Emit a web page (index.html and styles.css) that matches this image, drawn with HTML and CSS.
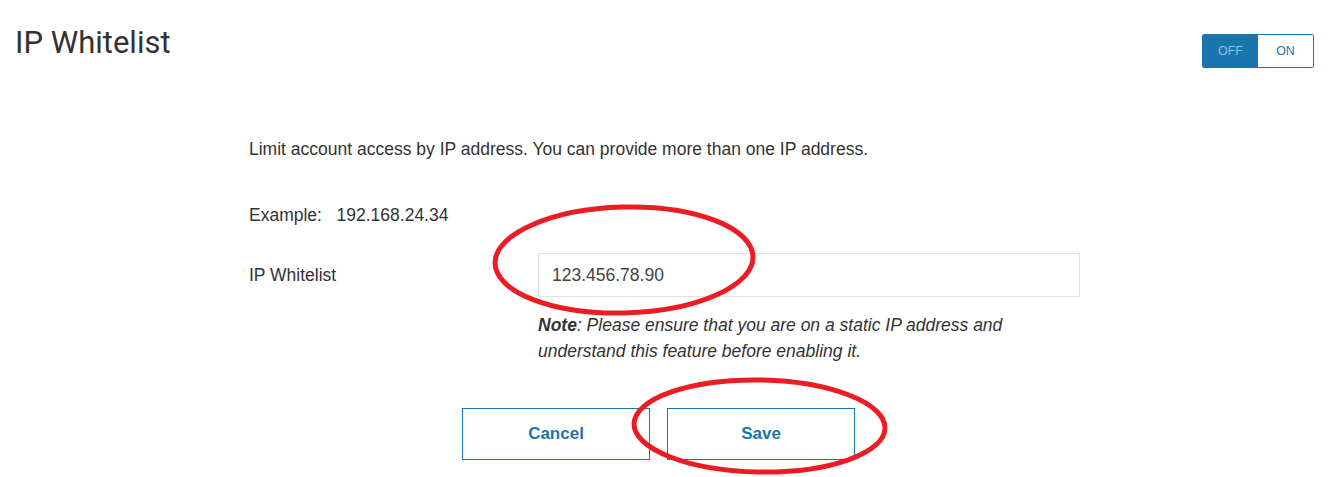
FILE: index.html
```html
<!DOCTYPE html>
<html>
<head>
<meta charset="utf-8">
<link rel="stylesheet" href="styles.css">
</head>
<body>
<div class="page">
  <header class="header">
    <h1 class="title">IP Whitelist</h1>
    <div class="toggle">
      <span class="toggle-opt toggle-off">OFF</span>
      <span class="toggle-opt toggle-on">ON</span>
    </div>
  </header>
  <main class="content">
    <p class="intro">Limit account access by IP address. You can provide more than one IP address.</p>
    <p class="example">Example:&nbsp;&nbsp; 192.168.24.34</p>
    <div class="field-row">
      <label class="field-label">IP Whitelist</label>
      <div class="field-main">
        <div class="input">123.456.78.90</div>
        <p class="note"><b>Note</b>: Please ensure that you are on a static IP address and<br>understand this feature before enabling it.</p>
      </div>
    </div>
    <div class="actions">
      <button class="btn">Cancel</button>
      <button class="btn">Save</button>
    </div>
  </main>
  <svg class="marks" width="1336" height="477" viewBox="0 0 1336 477">
    <ellipse cx="624" cy="260" rx="129" ry="53" transform="rotate(-1.5 624 260)" fill="none" stroke="#ec1c24" stroke-width="5"/>
    <ellipse cx="759.5" cy="426" rx="125.5" ry="46" transform="rotate(1 759.5 426)" fill="none" stroke="#ec1c24" stroke-width="5"/>
  </svg>
</div>
</body>
</html>
```
FILE: styles.css
```css
html, body {
  margin: 0;
  padding: 0;
  background: #fff;
}
.page {
  position: relative;
  width: 1336px;
  height: 477px;
  overflow: hidden;
  font-family: "Liberation Sans", Arial, sans-serif;
  color: #333;
}
.header {
  display: flex;
  justify-content: space-between;
  align-items: flex-start;
  padding: 26px 22px 0 15px;
}
.title {
  margin: 0;
  font-family: Roboto, "Liberation Sans", sans-serif;
  font-weight: 400;
  font-size: 31px;
  line-height: 34px;
  color: #333;
}
.toggle {
  display: flex;
  margin-top: 8px;
  border: 1px solid #1a75ad;
  border-radius: 2px;
  height: 32px;
  overflow: hidden;
}
.toggle-opt {
  width: 55px;
  display: flex;
  align-items: center;
  justify-content: center;
  font-size: 12.5px;
  font-family: "Liberation Sans", Arial, sans-serif;
}
.toggle-off {
  background: #1a75ad;
  color: #8fc0e0;
}
.toggle-on {
  background: #fff;
  color: #1a75ad;
}
.content {
  margin-left: 249px;
  width: 831px;
  margin-top: 71px;
  font-size: 17.5px;
}
.intro {
  margin: 0;
  line-height: 20px;
}
.example {
  margin: 46px 0 0;
  line-height: 20px;
}
.field-row {
  display: flex;
  margin-top: 28px;
}
.field-label {
  width: 289px;
  line-height: 44px;
}
.field-main {
  flex: 1;
}
.input {
  height: 42px;
  border: 1px solid #e3e3e3;
  padding: 0 13px;
  line-height: 42px;
  color: #444;
}
.note {
  margin: 15px 0 0;
  font-style: italic;
  line-height: 26px;
}
.actions {
  display: flex;
  gap: 17px;
  margin-left: 213px;
  margin-top: 44px;
}
.btn {
  width: 188px;
  height: 52px;
  background: #fff;
  border: 1px solid #1a75ad;
  color: #1a75ad;
  font-family: "Liberation Sans", Arial, sans-serif;
  font-weight: 700;
  font-size: 17px;
  padding: 0;
}
.marks {
  position: absolute;
  left: 0;
  top: 0;
  pointer-events: none;
}
```
